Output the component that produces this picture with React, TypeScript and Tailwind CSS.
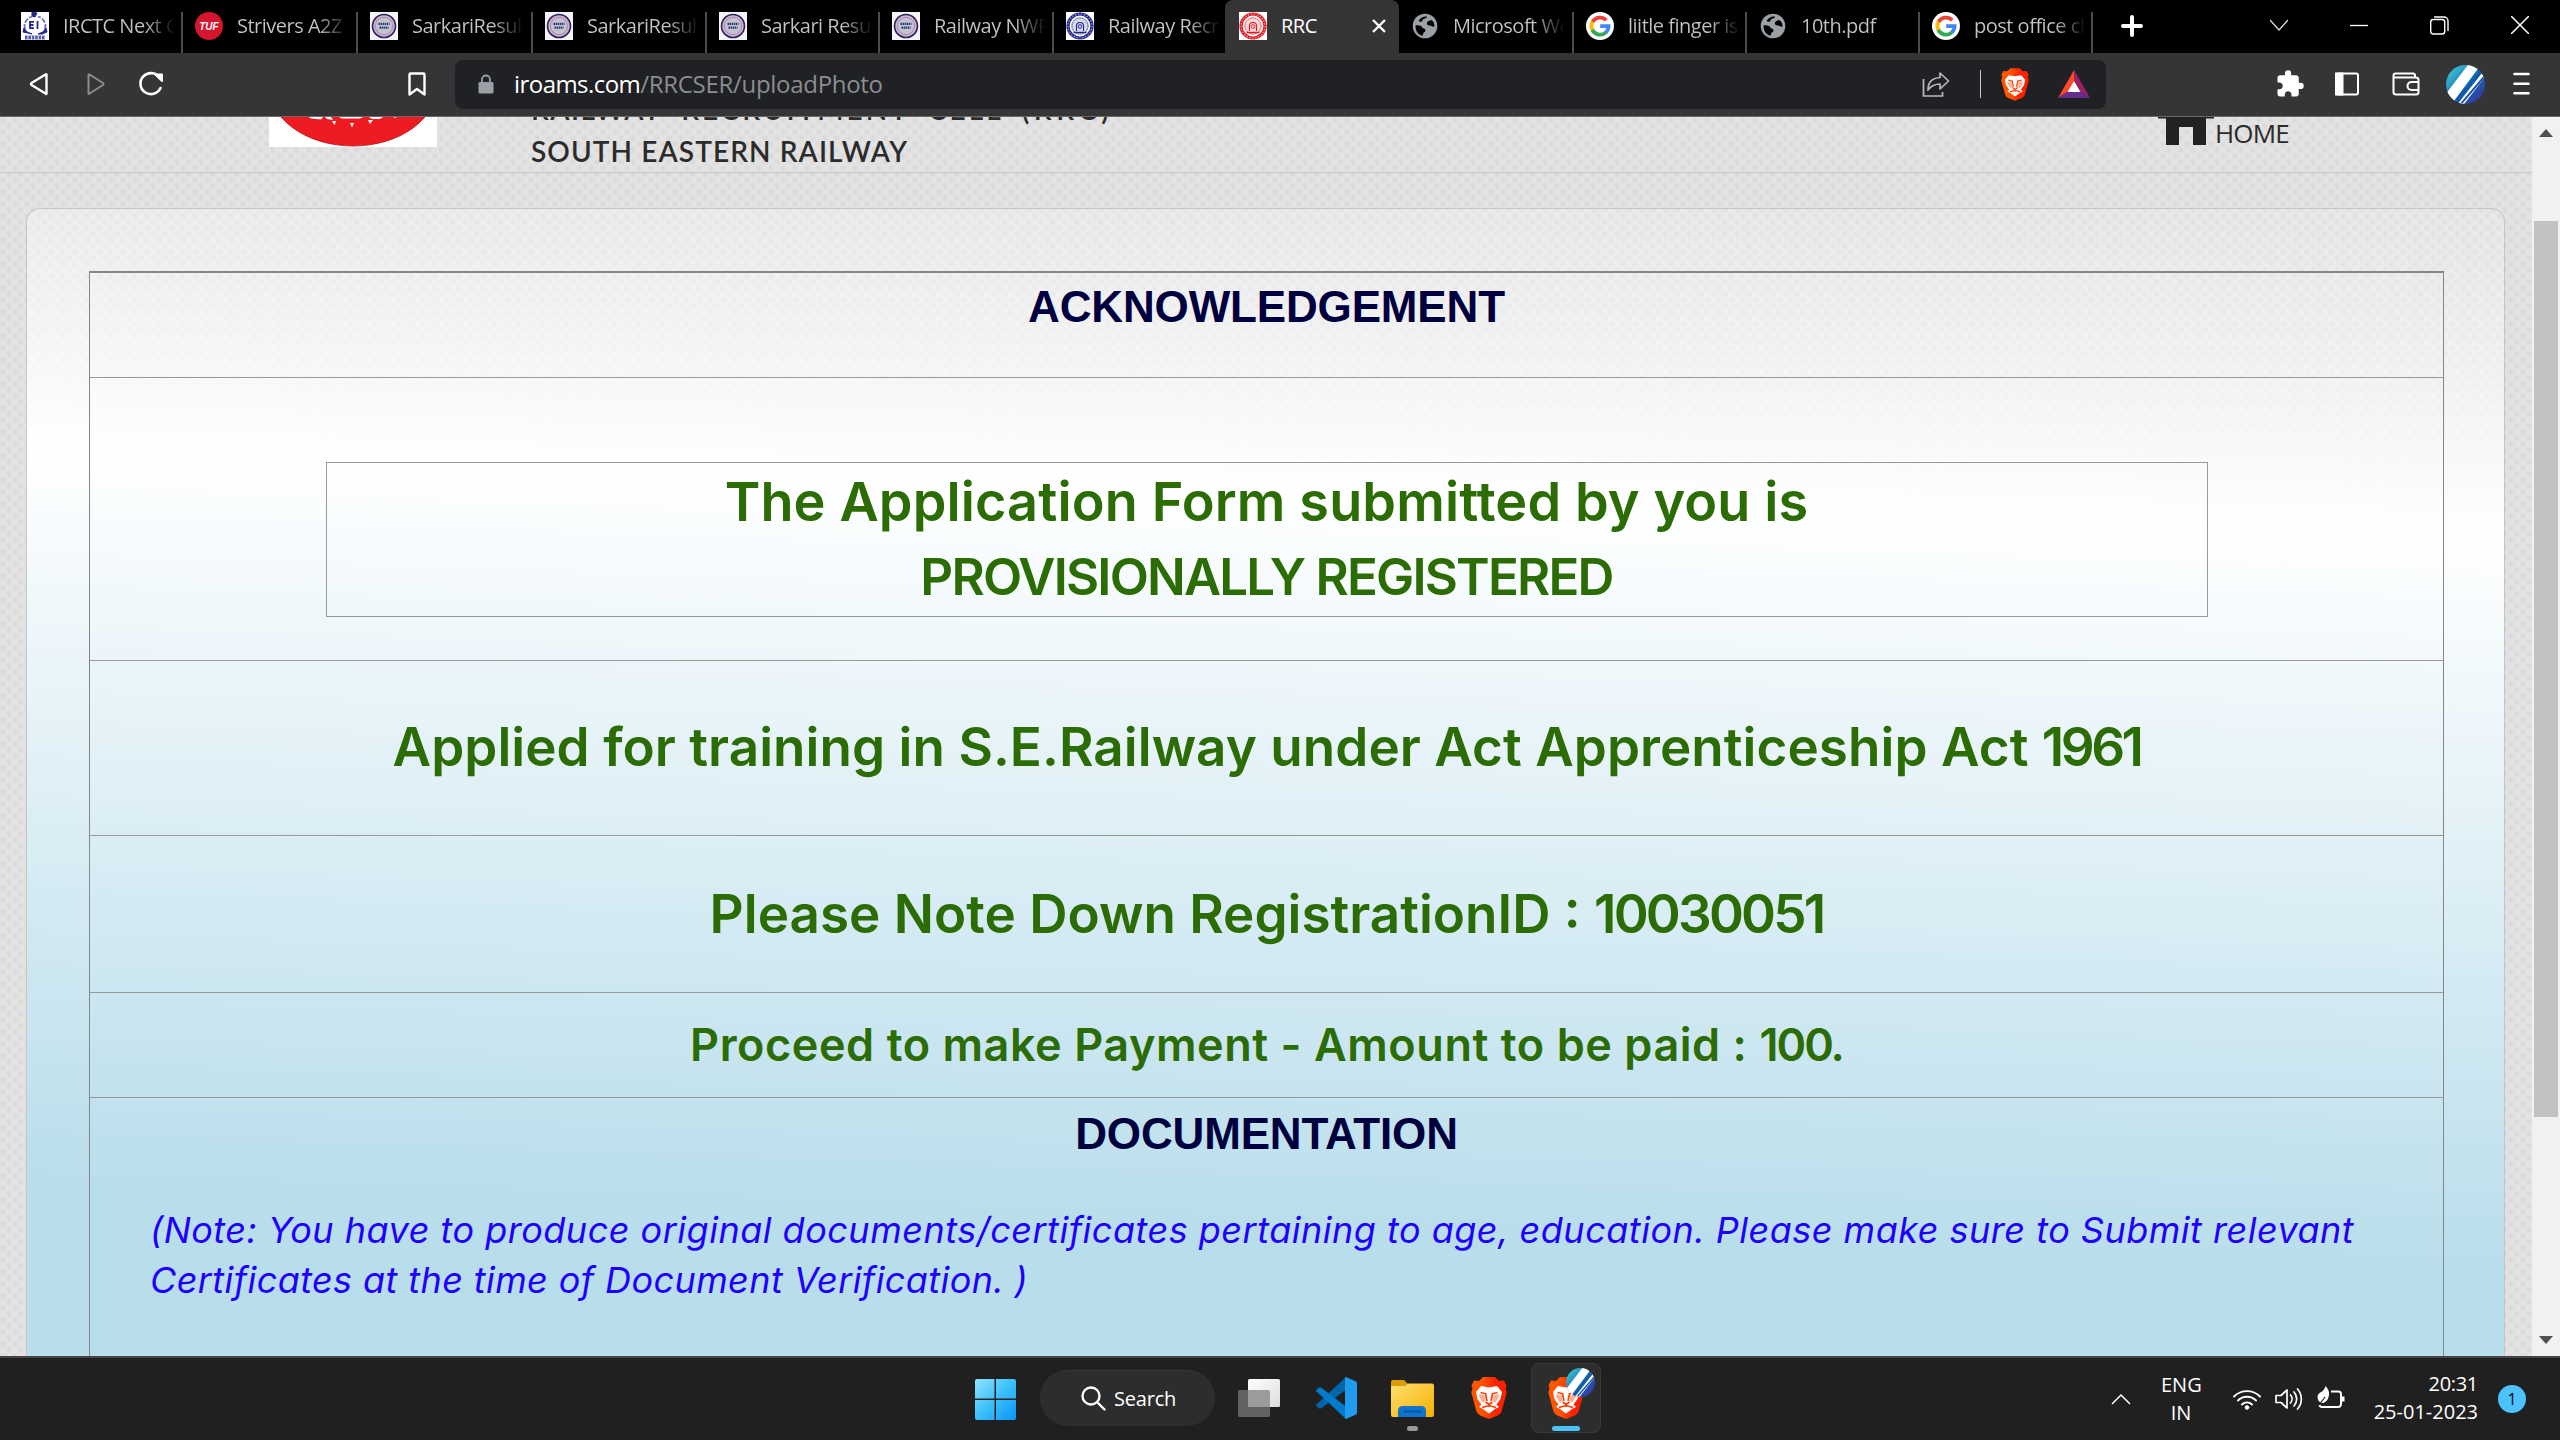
import type { ReactNode } from "react";
import { MdExtension } from "react-icons/md";

const Sarkari = () => (
  <svg viewBox="0 0 28 28" className="size-7 shrink-0 bg-[#f4f4fc]">
    <circle cx="14" cy="14" r="11.5" fill="#cdb2d6" stroke="#2b2350" strokeWidth="1.6" />
    <circle cx="14" cy="14" r="8.6" fill="#c4c4cc" stroke="#a58ab4" strokeWidth="1" />
    <path d="M8.5 11.8h11M9.5 15.6h9" stroke="#28377c" strokeWidth="2.2" strokeDasharray="1.5 0.6" />
  </svg>
);

const Irctc = () => (
  <svg viewBox="0 0 28 28" className="size-7 shrink-0 bg-white" fill="none">
    <path d="M4 17C2 11 6 6 11 4.500M24 17c2-6-2-11-7-12.500" stroke="#6a70bd" strokeWidth="1.800" strokeDasharray="5 1.500" />
    <path d="M11 0l5 1-2 4-3-1zM3 16l3 4 5 2-4-1-5-1zM25 16l-3 4-5 2 4 0 5-2z" fill="#22288f" stroke="#22288f" />
    <path d="M9 9v8M9 9.800h4M9 13h3.500M9 16.200h4M16.500 9v8" stroke="#22288f" strokeWidth="1.800" />
    <path d="M4 25.500h20" stroke="#5a60b3" strokeWidth="4" strokeDasharray="2.600 0.800" />
  </svg>
);

const Tuf = () => (
  <span className="flex size-7 shrink-0 items-center justify-center rounded-full bg-[#d5152d] font-['Liberation_Sans'] text-[10px] font-bold italic text-white">
    TUF
  </span>
);

const Seal = ({ color }: { color: string }) => (
  <svg viewBox="0 0 28 28" className="size-7 shrink-0 bg-white" fill="none" stroke={color}>
    <circle cx="14" cy="14" r="12" strokeWidth="3.200" />
    <circle cx="14" cy="14" r="12" stroke="#fff" strokeOpacity="0.550" strokeWidth="1.200" strokeDasharray="1.500 1.500" />
    <circle cx="14" cy="14" r="9" fill={color} fillOpacity="0.180" stroke="none" />
    <circle cx="14" cy="14" r="8" strokeWidth="0.800" strokeDasharray="1.500 0.800" />
    <path d="M10.500 19v-5a3.500 3.500 0 017 0v5" strokeWidth="1.100" />
    <circle cx="14" cy="14.500" r="1.800" strokeWidth="1" />
    <path d="M7.500 20.500h13" strokeWidth="1.400" />
  </svg>
);

const Globe = () => (
  <svg viewBox="0 0 28 28" className="size-7 shrink-0">
    <circle cx="14" cy="14" r="12.300" fill="#9aa0a6" />
    <path d="M4.500 13.500c1.500-.5 4 0 5.500.5 1.500.8 1 2 2.500 2.400 1.600.3 2.300 1.200 1.900 2.600-.4 1.200-2.200 1.300-2.400 3.200l-.3 1.600C7 23 4.300 18.500 4.500 13.500zM16 4.500c-.3 1.700-1.700 2-3.100 2.300-1.600.4-.8 2-2.200 2.600-1 .5-2.400.1-3.100-.5C9.500 5.500 12.700 4 16 4.500zM20.500 8c-2.200.5-4.600 1.300-4.600 3.300 0 1.600 1.500 2.300 3.100 2.200 1.500 0 1.700 1.500 4.400 1.100C23.700 12 22.600 9.500 20.500 8z" fill="#000" />
  </svg>
);

const Google = () => (
  <svg viewBox="0 0 28 28" className="size-7 shrink-0">
    <circle cx="14" cy="14" r="14" fill="#fff" />
    <g fill="none" strokeWidth="3.800">
      <path d="M20.200 8.200A8.600 8.600 0 006.500 10" stroke="#ea4335" />
      <path d="M6.500 9.800a8.600 8.600 0 000 8.400" stroke="#fbbc05" />
      <path d="M6.300 17.900a8.600 8.600 0 0013.600 2.400" stroke="#34a853" />
      <path d="M14.200 14.200h8.400a8.600 8.600 0 01-2.900 6.300" stroke="#4285f4" />
    </g>
  </svg>
);

const tabs: { icon: ReactNode; label: string; w: string }[] = [
  { icon: <Irctc />, label: "IRCTC Next G", w: "w-[174px]" },
  { icon: <Tuf />, label: "Strivers A2Z D", w: "w-[175px]" },
  { icon: <Sarkari />, label: "SarkariResult", w: "w-[175px]" },
  { icon: <Sarkari />, label: "SarkariResult", w: "w-[174px]" },
  { icon: <Sarkari />, label: "Sarkari Result", w: "w-[173px]" },
  { icon: <Sarkari />, label: "Railway NWR", w: "w-[174px]" },
  { icon: <Seal color="#23268c" />, label: "Railway Recru", w: "w-[171px]" },
  { icon: <Seal color="#dd1d26" />, label: "RRC", w: "w-[174px]" },
  { icon: <Globe />, label: "Microsoft Wo", w: "w-[175px]" },
  { icon: <Google />, label: "liitle finger is", w: "w-[173px]" },
  { icon: <Globe />, label: "10th.pdf", w: "w-[173px]" },
  { icon: <Google />, label: "post office ch", w: "w-[173px]" },
];

function Tab({ icon, label, w, active, beforeActive }: { icon: ReactNode; label: string; w: string; active: boolean; beforeActive: boolean }) {
  return (
    <div className={`${w} relative flex h-[53px] shrink-0 pt-3 ${active ? "rounded-t-lg bg-[#353535] pl-[14px]" : "pl-3"}`}>
      {icon}
      <span
        className={`ml-[14px] h-7 w-[112px] overflow-hidden whitespace-nowrap text-[20px] leading-[28px] tracking-[-0.5px] ${
          active ? "text-white" : "bg-gradient-to-r from-[#c4c4c4] from-72% to-transparent bg-clip-text text-transparent"
        }`}
      >
        {label}
      </span>
      {active && (
        <svg viewBox="0 0 14 14" className="absolute right-[13px] top-[19px] size-[14px]" stroke="#fff" strokeWidth="2.400">
          <path d="M1 1l12 12M13 1L1 13" />
        </svg>
      )}
      {!active && !beforeActive && <span className="absolute right-0 top-3 h-[41px] w-0.5 bg-[#4c4c4c]" />}
    </div>
  );
}

function TabStrip() {
  return (
    <div className="flex h-[53px] bg-black pl-[9px]">
      {tabs.map((t, i) => (
        <Tab key={i} {...t} active={i === 7} beforeActive={i === 6} />
      ))}
      <svg viewBox="0 0 22 22" className="ml-7 mt-[15px] size-[22px]" stroke="#fff" strokeWidth="4" strokeLinecap="round">
        <path d="M11 2v18M2 11h18" />
      </svg>
      <div className="ml-auto mr-[31px] flex pt-4">
        <svg viewBox="0 0 18 18" className="size-[18px]" fill="none" stroke="#ddd" strokeWidth="1.200">
          <path d="M0 4l9 10 9-10" />
        </svg>
        <svg viewBox="0 0 18 18" className="ml-[62px] size-[18px]" stroke="#fff" strokeWidth="1.300">
          <path d="M0 9.500h18" />
        </svg>
        <svg viewBox="0 0 19 19" className="ml-[62px] size-[19px]" fill="none" stroke="#fff" strokeWidth="1.400">
          <rect x="0.700" y="3.500" width="14" height="14.500" rx="2.500" />
          <path d="M4 1h10a4 4 0 014 4v10" />
        </svg>
        <svg viewBox="0 0 18 18" className="ml-[62px] size-[18px]" stroke="#fff" strokeWidth="1.500">
          <path d="M0 0l18 18M18 0L0 18" />
        </svg>
      </div>
    </div>
  );
}

const Lion = ({ className, id }: { className: string; id: string }) => (
  <svg viewBox="0 0 36 42" className={className}>
    <defs>
      <linearGradient id={id}>
        <stop offset="0.300" stopColor="#ff5500" />
        <stop offset="0.700" stopColor="#ff2000" />
      </linearGradient>
    </defs>
    <path d="M12 0h12l4 4 5-.5 2.500 5-1 3 1.200 4-5 18.500c-.6 2-2 3-4 4.500L18 42l-8.700-3.500c-2-1.500-3.400-2.500-4-4.500L.3 15.500l1.200-4-1-3L3 3.500 8 4z" fill={`url(#${id})`} />
    <path d="M10 9l8 1.500L26 9l5 6-1.500 7-4 5.500L28 30l-4 2-6 4.500L12 32l-4-2 2.500-2.500-4-5.500L5 15z" fill="#fff" />
    <path d="M9.500 15.500l6 1.500M26.500 15.500l-6 1.500M14.500 17l1.500 7M21.500 17l-1.500 7" fill="none" stroke="#ff4208" strokeWidth="1.700" />
    <path d="M8 17l5.500 1.500 1 5L12 26l-3.500-5.500zM28 17l-5.500 1.500-1 5L24 26l3.500-5.500z" fill="#ff4a0a" fillOpacity="0.450" />
    <path d="M14.500 25l3.500 2.500 3.500-2.500M18 27v3M11 30.500l7-2 7 2" fill="none" stroke="#ff3d05" strokeWidth="1.600" />
  </svg>
);

const Avatar = ({ className, id }: { className: string; id: string }) => (
  <svg viewBox="0 0 40 40" className={className}>
    <defs>
      <linearGradient id={id} x1="0" y1="0" x2="1" y2="1">
        <stop offset="0.100" stopColor="#3cc4d4" />
        <stop offset="0.550" stopColor="#1763ac" />
        <stop offset="1" stopColor="#3b2ba0" />
      </linearGradient>
      <clipPath id={`${id}c`}>
        <circle cx="20" cy="20" r="20" />
      </clipPath>
    </defs>
    <g clipPath={`url(#${id}c)`}>
      <rect width="40" height="40" fill={`url(#${id})`} />
      <path d="M-2 32L24-2l10 4L6 40zM12 40L38 7l3 4L17 42z" fill="#fff" />
      <path d="M11 36L37 5" stroke="#0f5ca6" strokeWidth="3" />
      <path d="M16 39L40 11" stroke="#1a53a8" strokeWidth="2" />
    </g>
  </svg>
);

function Toolbar() {
  return (
    <div className="flex h-16 items-center border-b border-[#6a6a6a] bg-[#353535] pb-px pl-[29px] pr-[30px]">
      <svg viewBox="0 0 20 24" className="h-6 w-5" fill="none" stroke="#fff" strokeWidth="2.400" strokeLinejoin="round">
        <path d="M17.500 2.500v19q0 1-1 0L2.500 13q-1-1 0-2L16.500 2.500z" />
      </svg>
      <svg viewBox="0 0 20 24" className="ml-[37px] h-6 w-5" fill="none" stroke="#8c8c8c" strokeWidth="2" strokeLinejoin="round">
        <path d="M2.500 2.500v19q0 1 1 0L17 13q1-1 0-2L3.500 2.500z" />
      </svg>
      <svg viewBox="0 0 26 26" className="ml-[32px] size-[26px]" fill="none" stroke="#fff" strokeWidth="2.600" strokeLinecap="round">
        <path d="M21.500 6.500A10.500 10.500 0 1022.500 17" />
        <path d="M17.500 3.500h6.500v6.500z" fill="#fff" strokeWidth="2" strokeLinejoin="round" />
      </svg>
      <svg viewBox="0 0 18 24" className="ml-[244px] h-6 w-[18px]" fill="none" stroke="#fff" strokeWidth="2.400" strokeLinejoin="round">
        <path d="M1.500 2.500q0-1 1-1h13q1 0 1 1v20L9 17l-7.500 5.500z" />
      </svg>
      <div className="ml-[29px] flex h-[49px] w-[1651px] items-center rounded-lg bg-[#202124] pl-[23px] pr-4">
        <svg viewBox="0 0 16 20" className="h-5 w-4" fill="#9aa0a6">
          <rect x="0.500" y="8" width="15" height="11.500" rx="1.500" />
          <path d="M4 9V5.500a4 4 0 018 0V9" fill="none" stroke="#9aa0a6" strokeWidth="1.800" />
        </svg>
        <div className="ml-5 text-[24px] leading-[30px]">
          <span className="tracking-[-0.55px] text-white">iroams.com</span>
          <span className="tracking-[-0.3px] text-[#8b8d91]">/RRCSER/uploadPhoto</span>
        </div>
        <svg viewBox="0 0 28 26" className="ml-auto h-[26px] w-7" fill="none" stroke="#b9babc" strokeWidth="1.700">
          <path d="M1.500 8v17h19v-4" />
          <path d="M6 19c0-8 4-12 12-12.500V2l8.500 8-8.500 8v-5C12 13 9 15 6 19z" strokeLinejoin="round" />
        </svg>
        <div className="ml-[30px] h-7 w-px bg-[#c9c9c9]" />
        <Lion id="lionBar" className="ml-5 h-[33px] w-[28px]" />
        <svg viewBox="0 0 32 28" className="ml-[29px] h-7 w-8">
          <path d="M16 0v12l-6 9.500L0 28z" fill="#ff4724" />
          <path d="M16 0l16 28-10-6.500L16 12z" fill="#9e1f63" />
          <path d="M0 28l10-6.500h12L32 28z" fill="#662d91" />
          <path d="M16 11l6.500 11h-13z" fill="#fff" />
        </svg>
      </div>
      <div className="ml-auto flex items-center">
        <MdExtension className="size-[30px] text-white" />
        <svg viewBox="0 0 24 24" className="ml-[30px] size-6" fill="none" stroke="#fff" strokeWidth="2">
          <rect x="1" y="1.500" width="22" height="21" rx="2" />
          <path d="M1 1.500h6.500v21H1z" fill="#fff" />
        </svg>
        <svg viewBox="0 0 28 24" className="ml-[33px] h-6 w-7" fill="none" stroke="#fff" strokeWidth="2">
          <path d="M23 5V3.500q0-2-2-2H3.500q-2 0-2 2V20q0 2.500 2.500 2.500h20q2.500 0 2.500-2.500V8q0-2.500-2.500-2.500H2" />
          <path d="M26.500 10h-7a4 4 0 000 8h7" />
        </svg>
        <Avatar id="avBar" className="ml-[26px] size-[39px]" />
        <svg viewBox="0 0 17 24" className="ml-7 h-6 w-[17px]" stroke="#fff" strokeWidth="2.600" strokeLinecap="round">
          <path d="M1.500 2h14M1.500 11.700h14M1.500 21.300h14" />
        </svg>
      </div>
    </div>
  );
}

function SiteHeader() {
  return (
    <div className="flex h-14 shrink-0 items-start overflow-hidden border-b border-[#c8c8c8] pl-[269px]">
      <svg viewBox="0 0 168 30" className="h-[30px] w-[168px] shrink-0 bg-white">
        <ellipse cx="84" cy="-31" rx="84" ry="60" fill="#ee1b22" stroke="#b5121a" strokeWidth="0.800" />
        <g fill="#fff">
          <path d="M40 0h14l-2 2.500-10-1zM56 0h6l2 3-6-1zM70 0h24l-3 1.500H73zM100 0h14l-3 2h-8zM124 0h4l-2 1z" />
          <path d="M63 4h4l-1.500 4zM81 6h4l-2 4.500zM99 3h5l-3 4z" />
        </g>
      </svg>
      <div className="ml-[94px] -mt-[29px] font-['Lato'] text-[28px] font-semibold leading-[42px] text-[#2b2b2b]">
        <div className="whitespace-nowrap tracking-[3px] [word-spacing:9px]">
          <span className="tracking-[1.5px]">RAILWAY</span> RECRUITMENT CELL <span className="tracking-[4.5px]">(RRC)</span>
        </div>
        <div className="whitespace-nowrap tracking-[1.1px]">SOUTH EASTERN RAILWAY</div>
      </div>
      <div className="ml-auto mr-[243px] flex">
        <svg viewBox="0 0 56 28" className="h-7 w-14" fill="#222">
          <path d="M0 0h56v1.500H48V28H35V10H21v18H8V1.500H0z" />
        </svg>
        <span className="ml-px text-[26px] leading-[32px] tracking-[-0.8px] text-[#2b2b2b]">HOME</span>
      </div>
    </div>
  );
}

function Acknowledgement() {
  return (
    <div className="ml-[26px] mr-[27px] mt-[35px] flex-1 overflow-hidden rounded-t-[14px] border border-b-0 border-[#c6c6c6] bg-[linear-gradient(182deg,rgba(255,255,255,0.15)_0px,rgba(255,255,255,0.55)_160px,#ffffff_325px,#b8ddeb_1070px)] pl-[62px] pr-[60px] pt-[62px]">
      <div className="h-[1200px] border-x border-t-2 border-[#868686] text-center font-['Inter'] font-semibold text-[#2b6c05]">
        <div className="h-[105px] border-b border-[#999] pt-px font-['Liberation_Sans'] text-[44px] font-bold leading-[66px] tracking-[-0.15px] text-[#00003f]">
          ACKNOWLEDGEMENT
        </div>
        <div className="h-[283px] border-b border-[#999] pt-[84px]">
          <div className="mx-auto h-[155px] w-[1882px] border border-[#999] pt-px text-[54px] leading-[75px]">
            <div className="tracking-[0.13px]">The Application Form submitted by you is</div>
            <div className="text-[51px] tracking-[-1.8px]">PROVISIONALLY REGISTERED</div>
          </div>
        </div>
        <div className="flex h-[175px] items-center justify-center whitespace-pre border-b border-[#999] text-[53px] tracking-[0.05px]">
          <span>Applied for training in S.E.Railway under Act Apprenticeship Act </span>
          <span className="tracking-[-3.5px]">1961</span>
        </div>
        <div className="flex h-[157px] items-center justify-center whitespace-pre border-b border-[#999] pt-px text-[53px]">
          <span>Please Note Down RegistrationID : </span>
          <span className="tracking-[-2.8px]">10030051</span>
        </div>
        <div className="flex h-[105px] items-center justify-center whitespace-pre border-b border-[#999] text-[45px] tracking-[0.55px]">
          <span>Proceed to make Payment - Amount to be paid : </span>
          <span className="tracking-[-2px]">100.</span>
        </div>
        <div className="pt-[3px] font-['Liberation_Sans'] text-[44px] font-bold leading-[66px] tracking-[-0.15px] text-[#00003f]">
          DOCUMENTATION
        </div>
        <div className="mt-[38px] whitespace-nowrap pl-[60px] text-left text-[36px] font-normal italic leading-[50px] text-[#1f00ff]">
          <div className="tracking-[0.5px]">
            (Note: You have to produce original documents/certificates pertaining to age, education. Please make sure to Submit relevant
          </div>
          <div className="tracking-[0.4px]">Certificates at the time of Document Verification. )</div>
        </div>
      </div>
    </div>
  );
}

function Taskbar() {
  return (
    <div className="flex h-[84px] items-start border-t-2 border-[#444] bg-[#202020] pl-[975px] text-white">
      <svg viewBox="0 0 41 41" className="mt-[21px] size-[41px]">
        <defs>
          <linearGradient id="win" x1="0" y1="0" x2="1" y2="1">
            <stop offset="0" stopColor="#8fe3ff" />
            <stop offset="0.450" stopColor="#43c4fb" />
            <stop offset="1" stopColor="#0a95fa" />
          </linearGradient>
        </defs>
        <path d="M2 0h17.500v19.500H0V2q0-2 2-2zM21 0h18q2 0 2 2v17.500H21zM0 21h19.500v20H2q-2 0-2-2zM21 21h20v18q0 2-2 2H21z" fill="url(#win)" />
      </svg>
      <div className="ml-6 mt-3 flex h-14 w-[175px] items-center rounded-full border-t border-[#383838] bg-[#2d2d2d] pl-[41px]">
        <svg viewBox="0 0 25 25" className="size-[25px]" fill="none" stroke="#fff" strokeWidth="2.400" strokeLinecap="round">
          <circle cx="10" cy="10" r="8.500" />
          <path d="M16.500 16.500l7 7" />
        </svg>
        <span className="ml-2 text-[20px] tracking-[-0.2px]">Search</span>
      </div>
      <svg viewBox="0 0 42 40" className="ml-[23px] mt-5 h-10 w-[42px]">
        <defs>
          <linearGradient id="tv" x1="0" y1="0" x2="1" y2="1">
            <stop offset="0" stopColor="#fff" />
            <stop offset="1" stopColor="#dcdcdc" />
          </linearGradient>
        </defs>
        <rect x="0" y="12" width="32" height="27" rx="1.500" fill="#626262" />
        <rect x="10" y="1" width="32" height="28" rx="1.500" fill="url(#tv)" />
        <path d="M10 12h20q2 0 2 2v15H11.500q-1.500 0-1.500-1.500z" fill="#9c9c9c" />
      </svg>
      <svg viewBox="0 0 42 42" className="ml-[35px] mt-[19px] size-[42px]">
        <path d="M.7 28.300l3 3q1.200.9 2.600 0L31 12.500V0z" fill="#0065a9" />
        <path d="M.7 13.700l3-3q1.200-.9 2.600 0L31 29.500V42z" fill="#007acc" />
        <path d="M31 0l10 4.500q1 .6 1 2v29q0 1.400-1 2L31 42q-1 0-1-1.500v-39Q30 0 31 0z" fill="#1f9cf0" />
      </svg>
      <div className="ml-[34px] mt-[22px] flex w-[43px] flex-col items-center">
        <svg viewBox="0 0 43 38" className="h-[38px] w-[43px]">
          <defs>
            <linearGradient id="fold" x1="0" y1="0" x2="1" y2="1">
              <stop offset="0" stopColor="#ffdf72" />
              <stop offset="1" stopColor="#f5b000" />
            </linearGradient>
          </defs>
          <path d="M0 2q0-2 2-2h11l4 4h24v12H0z" fill="#dc9c06" />
          <path d="M0 6h14l3-2.500h24q2 0 2 2V35q0 2-2 2H2q-2 0-2-2z" fill="url(#fold)" />
          <path d="M7 37V31q0-5 5-5h18q5 0 5 5v6z" fill="#0f74cc" />
          <path d="M13 31.500h17" stroke="#0a53a3" strokeWidth="2" />
        </svg>
        <span className="mt-2 h-[5px] w-[11px] rounded-full bg-[#9a9a9a]" />
      </div>
      <Lion id="lionA" className="ml-[37px] mt-[19px] h-[42px] w-9" />
      <div className="relative ml-6 mt-[5px] flex h-[70px] w-[70px] justify-center rounded-lg border border-[#3a3a3a] bg-[#2d2d2d]">
        <Lion id="lionB" className="mt-[13px] h-[42px] w-9" />
        <Avatar id="avTask" className="absolute right-[5px] top-1 size-[29px]" />
        <span className="absolute bottom-px left-5 h-[5px] w-7 rounded-full bg-[#4cc2ff]" />
      </div>

      <div className="ml-auto mr-[34px] flex h-[82px] items-center text-[20px]">
        <svg viewBox="0 0 20 12" className="h-3 w-5" fill="none" stroke="#fff" strokeWidth="1.500">
          <path d="M1 11l9-9 9 9" />
        </svg>
        <div className="ml-[30px] w-10 text-center leading-[28px]">
          <div>ENG</div>
          <div>IN</div>
        </div>
        <svg viewBox="0 0 28 22" className="ml-8 h-[22px] w-7" fill="none" stroke="#fff" strokeWidth="1.900" strokeLinecap="round">
          <path d="M1 8.500a18.500 18.500 0 0126 0M5 12.500a12.800 12.800 0 0118 0M9 16.500a7 7 0 0110 0" />
          <circle cx="14" cy="19.500" r="1.800" fill="#fff" strokeWidth="1" />
        </svg>
        <svg viewBox="0 0 28 24" className="ml-[14px] h-6 w-7" fill="none" stroke="#fff" strokeWidth="1.700" strokeLinecap="round" strokeLinejoin="round">
          <path d="M1 8.500h5l6-5.500v18l-6-5.500H1z" />
          <path d="M15.500 8a6 6 0 010 8M19 5a10.500 10.500 0 010 14M22.500 2a15 15 0 010 20" />
        </svg>
        <svg viewBox="0 0 28 24" className="ml-[14px] h-6 w-7 -translate-y-0.5" fill="none" stroke="#fff" strokeWidth="2">
          <path d="M14 6.500h7.500q2.500 0 2.500 2.500v10q0 3-3 3H5q-2 0-2.500-2" />
          <path d="M25.500 11.500v5" strokeWidth="4" />
          <path d="M8.500 1c4 4 4 8 3 11-1 4-4 6-7 6-4-2-5-6-3-9 2-2 6-3 7-8z" fill="#fff" stroke="none" />
          <path d="M2 20l6-8" stroke="#202020" strokeWidth="1.200" />
        </svg>
        <div className="ml-[28px] w-[105px] whitespace-nowrap text-right leading-[28px] -translate-y-px">
          <div className="tracking-[-0.3px]">20:31</div>
          <div>25-01-2023</div>
        </div>
        <span className="ml-5 flex size-7 items-center justify-center rounded-full bg-[#4cc2ff] text-[16px] text-black">1</span>
      </div>
    </div>
  );
}

export default function App() {
  return (
    <div className="flex h-[1440px] w-[2560px] flex-col overflow-hidden font-['Open_Sans',sans-serif]">
      <TabStrip />
      <Toolbar />
      <div className="flex min-h-0 flex-1">
        <div className="flex w-[2532px] flex-col overflow-hidden bg-[#e3e3e3] bg-[radial-gradient(circle_at_3px_3px,#d8d5d9_0px,transparent_4px),radial-gradient(circle_at_9px_9px,#d8d6d8_0px,transparent_4px)] bg-[length:12px_12px]">
          <SiteHeader />
          <Acknowledgement />
        </div>
        <div className="flex w-7 flex-col items-center bg-[#f1f1f1] py-3">
          <svg viewBox="0 0 14 8" className="h-2 w-[14px]" fill="#505050">
            <path d="M0 8l7-8 7 8z" />
          </svg>
          <div className="mt-[84px] h-[896px] w-6 bg-[#c1c1c1]" />
          <svg viewBox="0 0 14 8" className="mt-auto h-2 w-[14px]" fill="#505050">
            <path d="M0 0l7 8 7-8z" />
          </svg>
        </div>
      </div>
      <Taskbar />
    </div>
  );
}
